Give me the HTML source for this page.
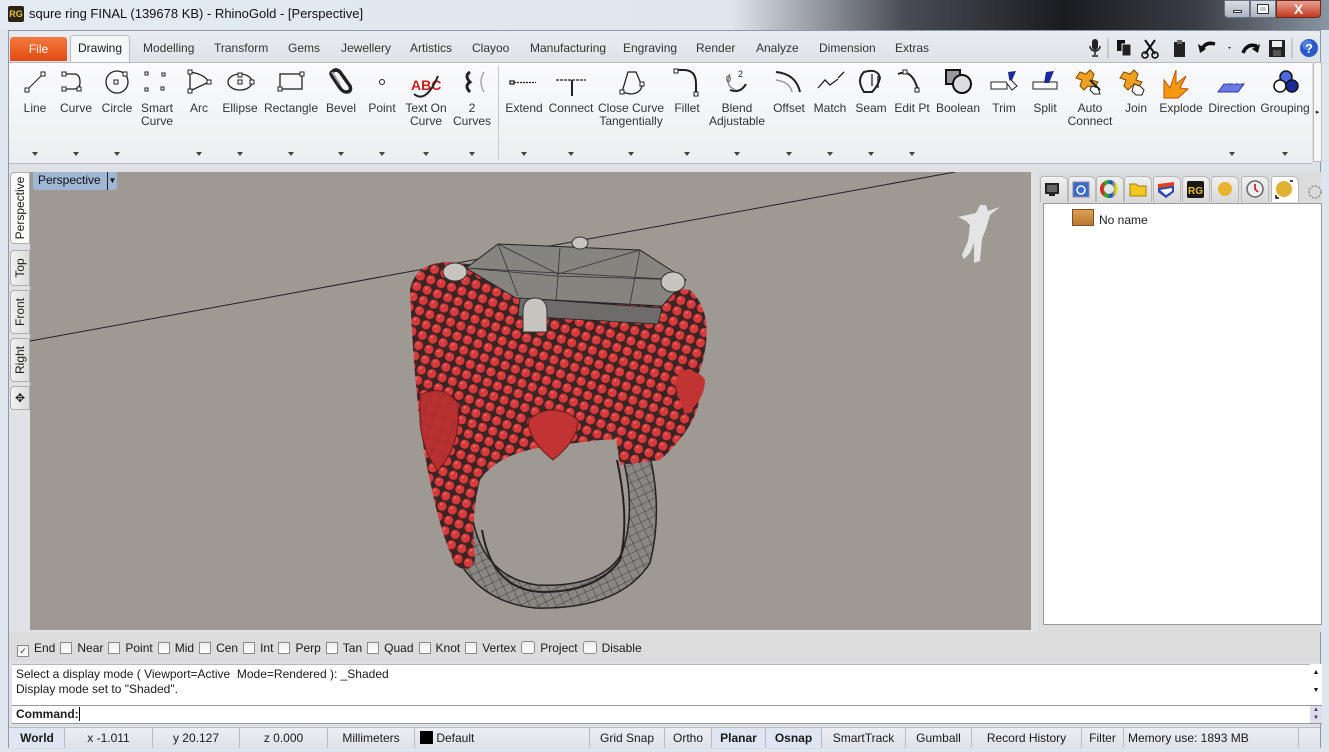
<!DOCTYPE html>
<html><head><meta charset="utf-8">
<style>
*{margin:0;padding:0;box-sizing:border-box}
body{width:1329px;height:752px;overflow:hidden;position:relative;background:#dde6ef;font-family:"Liberation Sans",sans-serif;font-size:12px;color:#1a1a1a}
.a{position:absolute}
.tab{position:absolute;top:38px;height:22px;line-height:20px;font-size:12px;color:#333}
.lbl{position:absolute;top:102px;font-size:12px;color:#333;text-align:center;line-height:13px;width:80px;margin-left:-40px}
.dd{position:absolute;top:152px;width:0;height:0;border-left:3px solid transparent;border-right:3px solid transparent;border-top:4px solid #444;margin-left:-3px}
.cb{display:inline-block;width:12px;height:12px;border:1px solid #8a8a8a;background:linear-gradient(#eee,#fff);vertical-align:-2px;margin-right:5px;margin-left:5px}
.st{position:absolute;top:728px;height:20px;line-height:20px;text-align:center;border-right:1px solid #b8bcc2;font-size:12px}
.vt{position:absolute;left:10px;width:20px;background:linear-gradient(90deg,#f2f2f2,#dcdcdc);border:1px solid #b0b0b0;border-radius:4px 0 0 4px}
.vt span{position:absolute;left:50%;top:50%;transform:translate(-50%,-50%) rotate(-90deg);white-space:nowrap;font-size:12px}
.ptab{position:absolute;top:176px;width:28px;height:26px;background:linear-gradient(#f0f0f0,#d8d8d8);border:1px solid #b8b8b8;border-bottom:none;border-radius:3px 6px 0 0}
</style></head><body>
<div class="a" style="left:0;top:0;width:1329px;height:30px;background:linear-gradient(90deg,#e4ebf2 0%,#dfe6ee 55%,#4a4d55 68%,#1b1c20 80%,#3a3d44 90%,#8a96a4 100%)"></div>
<div class="a" style="left:8px;top:6px;width:16px;height:16px;background:#2a2418;color:#e8c040;font-size:9px;font-weight:bold;line-height:16px;text-align:center;border-radius:2px">RG</div>
<div class="a" style="left:29px;top:6px;font-size:13px;color:#111">squre ring FINAL (139678 KB) - RhinoGold - [Perspective]</div>
<div class="a" style="left:1224px;top:0;width:26px;height:18px;background:linear-gradient(#d8dee6,#aab4c0);border:1px solid #6a7280;border-radius:0 0 0 4px"><div style="margin:9px auto 0;width:9px;height:3px;background:#fff;border:1px solid #333"></div></div>
<div class="a" style="left:1250px;top:0;width:26px;height:18px;background:linear-gradient(#d8dee6,#aab4c0);border:1px solid #6a7280"><div style="margin:4px auto 0;width:10px;height:8px;border:2px solid #fff;outline:1px solid #333"></div></div>
<div class="a" style="left:1276px;top:0;width:45px;height:18px;background:linear-gradient(#e8a090,#c23a20);border:1px solid #6a2a20;border-radius:0 0 4px 0;color:#fff;font-weight:bold;font-size:14px;text-align:center;line-height:17px">X</div>
<div class="a" style="left:8px;top:30px;width:1313px;height:718px;background:#dfe1e4;border:1px solid #8a98a8"></div>
<div class="a" style="left:9px;top:31px;width:1311px;height:31px;background:linear-gradient(#e9ecf0,#dfe3e8)"></div>
<div class="a" style="left:10px;top:37px;width:57px;height:24px;background:linear-gradient(#f47a40,#e24a10);border-radius:3px 3px 0 0;color:#fff;text-align:center;line-height:24px;font-size:12px">File</div>
<div class="a" style="left:70px;top:35px;width:60px;height:28px;background:#f6f7f8;border:1px solid #b8bcc2;border-bottom:none;border-radius:3px 3px 0 0;text-align:center;line-height:24px">Drawing</div>
<div class="tab" style="left:143px">Modelling</div>
<div class="tab" style="left:214px">Transform</div>
<div class="tab" style="left:288px">Gems</div>
<div class="tab" style="left:341px">Jewellery</div>
<div class="tab" style="left:410px">Artistics</div>
<div class="tab" style="left:472px">Clayoo</div>
<div class="tab" style="left:530px">Manufacturing</div>
<div class="tab" style="left:623px">Engraving</div>
<div class="tab" style="left:696px">Render</div>
<div class="tab" style="left:756px">Analyze</div>
<div class="tab" style="left:819px">Dimension</div>
<div class="tab" style="left:895px">Extras</div>
<svg class="a" style="left:1085px;top:36px" width="240" height="24">
<rect x="7" y="3" width="6" height="11" rx="3" fill="#222"/><path d="M5 10a5 5 0 0 0 10 0M10 15v4M7 20h6" stroke="#222" stroke-width="1.5" fill="none"/>
<line x1="23" y1="2" x2="23" y2="22" stroke="#aaa"/>
<rect x="32" y="4" width="8" height="11" fill="#111"/><rect x="37" y="8" width="9" height="12" fill="#222" stroke="#eee"/>
<path d="M60 4l10 14M70 4l-10 14" stroke="#111" stroke-width="2"/><circle cx="60" cy="19" r="3" fill="none" stroke="#111" stroke-width="1.6"/><circle cx="70" cy="19" r="3" fill="none" stroke="#111" stroke-width="1.6"/>
<rect x="89" y="6" width="11" height="15" fill="#222"/><rect x="92" y="4" width="5" height="4" fill="#666"/>
<path d="M116 15q4-10 14-7" stroke="#111" stroke-width="3.5" fill="none"/><path d="M113 8l2 9 6-4z" fill="#111"/>
<path d="M143 11l3 0-1.5 2z" fill="#333"/>
<path d="M158 17q4-10 14-7" stroke="#111" stroke-width="3.5" fill="none"/><path d="M175 8l-2 9-6-4z" fill="#111"/>
<rect x="184" y="4" width="16" height="17" fill="#222"/><rect x="187" y="5" width="10" height="6" fill="#eee"/><rect x="188" y="14" width="8" height="6" fill="#555"/>
<line x1="207" y1="2" x2="207" y2="22" stroke="#aaa"/>
<circle cx="224" cy="12" r="9" fill="#2a5ac8"/><circle cx="222" cy="9" r="5" fill="#6a9ae8" opacity=".6"/><text x="220" y="17" fill="#fff" font-size="13" font-weight="bold" font-family="Liberation Sans">?</text>
</svg>
<div class="a" style="left:9px;top:62px;width:1303px;height:102px;background:linear-gradient(#fbfbfc,#eceef1);border-top:1px solid #b8bcc2;border-bottom:1px solid #b8bcc2"></div>
<div class="a" style="left:498px;top:66px;width:1px;height:94px;background:#c4c8cc"></div>
<div class="a" style="left:1313px;top:62px;width:9px;height:100px;background:#f8f8f8;border:1px solid #bbb;font-size:7px;line-height:100px;text-align:center">▸</div>
<svg class="a" style="left:0;top:62px" width="1329" height="40" fill="none" stroke="#222" stroke-width="1.3">
<g fill="#fff" stroke-width="1">
<line x1="27" y1="28" x2="43" y2="12"/><rect x="25" y="26" width="4" height="4"/><rect x="41" y="10" width="4" height="4"/>
<path d="M64 12h10q6 0 6 8 0 7-6 7h-10" fill="none" stroke-width="1.3"/><rect x="62" y="10" width="4" height="4"/><rect x="62" y="25" width="4" height="4"/><rect x="77" y="25" width="4" height="4"/>
<circle cx="117" cy="20" r="11" fill="none" stroke-width="1.3"/><rect x="114" y="18" width="4" height="4"/><rect x="123" y="10" width="4" height="4"/>
<rect x="145" y="10" width="3" height="3"/><rect x="162" y="11" width="3" height="3"/><rect x="145" y="26" width="3" height="3"/><rect x="161" y="25" width="3" height="3"/>
<path d="M190 10q14 2 19 10l-19 9z" fill="none" stroke-width="1.3"/><rect x="188" y="8" width="4" height="4"/><rect x="188" y="27" width="4" height="4"/><rect x="207" y="18" width="4" height="4"/>
<ellipse cx="240" cy="20" rx="12" ry="8" fill="none" stroke-width="1.3"/><rect x="238" y="18" width="4" height="4"/><rect x="238" y="11" width="4" height="4"/><rect x="250" y="18" width="4" height="4"/>
<rect x="280" y="12" width="22" height="15" fill="none" stroke-width="1.3"/><rect x="278" y="25" width="4" height="4"/><rect x="300" y="10" width="4" height="4"/>
<circle cx="382" cy="20" r="2.5"/>
</g>
<path d="M332 10q4-4 8 0l10 14q2 6-4 6q-3 0-6-4l-8-12q-2-3 0-4z" stroke-width="3.5"/>
<path d="M332 10l8 12" stroke="#aaa" stroke-width="2"/>
<text x="411" y="28" font-size="14" font-weight="bold" fill="#c82020" stroke="none" font-family="Liberation Sans">ABC</text>
<path d="M414 32q12 10 24-18" stroke="#222" stroke-width="2"/>
<path d="M470 10q-6 4 0 10q-6 4 0 10" stroke-width="3"/><path d="M484 10q-6 10 0 20" stroke="#999"/>
<rect x="510" y="19" width="4" height="3" fill="#fff"/><path d="M514 20.5h22" stroke-dasharray="2 1"/>
<path d="M556 18h30" stroke-dasharray="3 1"/><path d="M572 18v16" stroke-width="2"/>
<path d="M622 30l6-20h8l6 14q-2 8-12 8z" fill="none"/><rect x="620" y="28" width="4" height="4" fill="#fff" stroke-width="1"/><rect x="640" y="20" width="4" height="4" fill="#fff" stroke-width="1"/>
<path d="M676 8h8q12 0 12 14v10" stroke-width="2"/><rect x="674" y="7" width="4" height="4" fill="#fff" stroke-width="1"/><rect x="694" y="30" width="4" height="4" fill="#fff" stroke-width="1"/>
<path d="M730 28q10 4 16-6" stroke-width="2"/><path d="M730 12q-6 12 6 16" stroke="#888"/><text x="726" y="20" font-size="9" fill="#222" stroke="none">0</text><text x="738" y="15" font-size="9" fill="#222" stroke="none">2</text>
<path d="M776 10q20 2 24 20" stroke-width="2"/><path d="M776 18q14 2 16 12" stroke="#999" stroke-width="1.5"/>
<path d="M818 26l7-8 5 5 8-6"/><path d="M838 16l6-6"/>
<path d="M864 30q-8-12 0-20q14-4 16 6q-2 8-8 14z" stroke-width="2"/><path d="M872 12v12M878 14v12"/>
<path d="M898 12q14-6 20 16" stroke-width="2"/><rect x="903" y="8" width="4" height="4" fill="#fff" stroke-width="1"/><rect x="915" y="26" width="4" height="4" fill="#fff" stroke-width="1"/>
<rect x="946" y="8" width="14" height="14" fill="#999" stroke="#111" stroke-width="2"/><circle cx="962" cy="22" r="9" fill="#ddd" stroke="#111" stroke-width="2"/>
<rect x="991" y="20" width="16" height="7" fill="#fff" stroke-width="1"/><path d="M1008 10l8-1-6 14z" fill="#1a2a9a" stroke="none"/><path d="M1006 20l6 8 5-4-6-6" fill="#fff" stroke-width="1"/>
<rect x="1033" y="20" width="24" height="7" fill="#fff" stroke-width="1"/><path d="M1046 10l8-1-5 12h-5z" fill="#1a2a9a" stroke="none"/>
<path d="M1080 10l6 2 4-4 4 4-2 6 6 2-4 6-6-2-4 4-4-4 2-6-6-2z" fill="#f0a020" stroke="#7a4a00" stroke-width="1"/><path d="M1090 18l10 10" stroke-width="2"/><path d="M1092 24l6 2 2 6-6 0-4-4z" fill="#fff" stroke-width="1"/>
<path d="M1124 10l6 2 4-4 4 4-2 6 6 2-4 6-6-2-4 4-4-4 2-6-6-2z" fill="#f0a020" stroke="#7a4a00" stroke-width="1"/><path d="M1134 22l6 2 4 4-2 5-6 0-4-4z" fill="#fff" stroke-width="1"/>
<path d="M1164 36l0-18 6 8 6-18 0 14 10-8-6 12 8 1-10 9z" fill="#f59a10" stroke="#c05000" stroke-width="1"/>
<path d="M1218 30l6-8h20l-6 8z" fill="#6a7ae0" stroke="#2a3aa0" stroke-width="1"/><path d="M1226 22v-3M1234 22v-3M1240 22v-3" stroke="#fff"/>
<circle cx="1286" cy="15" r="6" fill="#4a6ae0" stroke="#111" stroke-width="1.5"/><circle cx="1280" cy="24" r="6" fill="#fff" stroke="#111" stroke-width="1.5"/><circle cx="1292" cy="24" r="6" fill="#1a2a9a" stroke="#111" stroke-width="1.5"/>
</svg>
<div class="lbl" style="left:35px">Line</div><div class="lbl" style="left:76px">Curve</div><div class="lbl" style="left:117px">Circle</div><div class="lbl" style="left:157px">Smart<br>Curve</div><div class="lbl" style="left:199px">Arc</div><div class="lbl" style="left:240px">Ellipse</div><div class="lbl" style="left:291px">Rectangle</div><div class="lbl" style="left:341px">Bevel</div><div class="lbl" style="left:382px">Point</div><div class="lbl" style="left:426px">Text On<br>Curve</div><div class="lbl" style="left:472px">2<br>Curves</div>
<div class="lbl" style="left:524px">Extend</div><div class="lbl" style="left:571px">Connect</div><div class="lbl" style="left:631px;width:110px;margin-left:-55px">Close Curve<br>Tangentially</div><div class="lbl" style="left:687px">Fillet</div><div class="lbl" style="left:737px">Blend<br>Adjustable</div><div class="lbl" style="left:789px">Offset</div><div class="lbl" style="left:830px">Match</div><div class="lbl" style="left:871px">Seam</div><div class="lbl" style="left:912px">Edit Pt</div><div class="lbl" style="left:958px">Boolean</div><div class="lbl" style="left:1004px">Trim</div><div class="lbl" style="left:1045px">Split</div><div class="lbl" style="left:1090px">Auto<br>Connect</div><div class="lbl" style="left:1136px">Join</div><div class="lbl" style="left:1181px">Explode</div><div class="lbl" style="left:1232px">Direction</div><div class="lbl" style="left:1285px">Grouping</div>
<div class="dd" style="left:35px"></div><div class="dd" style="left:76px"></div><div class="dd" style="left:117px"></div><div class="dd" style="left:199px"></div><div class="dd" style="left:240px"></div><div class="dd" style="left:291px"></div><div class="dd" style="left:341px"></div><div class="dd" style="left:382px"></div><div class="dd" style="left:426px"></div><div class="dd" style="left:472px"></div><div class="dd" style="left:524px"></div><div class="dd" style="left:571px"></div><div class="dd" style="left:631px"></div><div class="dd" style="left:687px"></div><div class="dd" style="left:737px"></div><div class="dd" style="left:789px"></div><div class="dd" style="left:830px"></div><div class="dd" style="left:871px"></div><div class="dd" style="left:912px"></div><div class="dd" style="left:1232px"></div><div class="dd" style="left:1285px"></div>
<div class="vt" style="top:172px;height:72px;background:#fafafa"><span>Perspective</span></div>
<div class="vt" style="top:250px;height:36px"><span>Top</span></div>
<div class="vt" style="top:290px;height:44px"><span>Front</span></div>
<div class="vt" style="top:338px;height:44px"><span>Right</span></div>
<div class="vt" style="top:386px;height:24px"><span style="transform:translate(-50%,-50%)">✥</span></div>
<div class="a" style="left:30px;top:172px;width:1001px;height:458px;background:#9e9993"></div>
<svg class="a" style="left:30px;top:172px" width="1001" height="458" viewBox="30 172 1001 458">
<defs>
<pattern id="rd" width="11" height="11" patternUnits="userSpaceOnUse" patternTransform="rotate(20)">
<rect width="11" height="11" fill="#3a2424"/><circle cx="5.5" cy="5.5" r="4.6" fill="#d8393a"/><circle cx="4" cy="4" r="1.2" fill="#e86a6a"/>
</pattern>
<pattern id="wf" width="8" height="8" patternUnits="userSpaceOnUse" patternTransform="rotate(-25)">
<rect width="8" height="8" fill="#8a8682"/><path d="M0 0h8M0 0v8" stroke="#2a2a2a" stroke-width=".8"/>
</pattern>
</defs>
<line x1="30" y1="341" x2="955" y2="172" stroke="#222" stroke-width="1"/>
<path d="M445 520q15 80 90 88q85 2 115-45q15-60-5-125l-28 0q22 65 5 115q-20 35-85 32q-55-8-65-70z" fill="url(#wf)" stroke="#222" stroke-width="1.5"/>
<path d="M482 530q10 60 60 62q55 0 78-32q10-40-3-100" fill="none" stroke="#222" stroke-width="2"/>
<path d="M410 290Q415 262 450 262L690 290Q712 310 705 350Q700 390 660 420Q640 440 600 440L560 445Q500 450 480 480Q470 520 475 560Q470 575 455 565Q440 530 432 490Q415 420 410 290Z" fill="url(#rd)"/>
<path d="M610 400l90-20q5 40-40 80l-40 5z" fill="url(#rd)"/>
<path d="M420 395q22-12 38 8q4 40-20 68q-16-20-18-50z" fill="#b83030" stroke="#6a1a1a" opacity=".95"/>
<path d="M528 420q25-20 50 0q0 20-25 40q-25-20-25-40z" fill="#c23434" stroke="#6a1a1a"/>
<path d="M680 370q20 0 25 10q0 20-20 35l-10-30z" fill="#c23434"/>
<path d="M466 268l32-24 142 6 46 30-24 26-146-8z" fill="#86847f" stroke="#222"/>
<path d="M498 244l20 52M640 250l-10 54M466 268l220 12M560 248l-4 54M498 244l60 30 82-24M466 268l90 8 130 4" stroke="#333" stroke-width=".8" fill="none"/>
<path d="M520 298l142 10-4 16-140-8z" fill="#6e6c6a" stroke="#222" stroke-width=".8"/>
<ellipse cx="455" cy="272" rx="12" ry="9" fill="#c8c4c0" stroke="#333"/>
<ellipse cx="580" cy="243" rx="8" ry="6" fill="#c8c4c0" stroke="#333"/>
<ellipse cx="673" cy="282" rx="12" ry="10" fill="#c8c4c0" stroke="#333"/>
<path d="M523 312q0-14 12-14q12 0 12 14v20h-24z" fill="#c8c4c0" stroke="#333"/>
<path d="M958 217l18-4 4-8h6l2 6 12-4 -10 8-4 14-4 10-2 22-6 2 0-20-4 10-6 6-2-4 6-14 2-16-4-4z" fill="#e4e4e4"/>
</svg>
<div class="a" style="left:33px;top:172px;width:84px;height:18px;background:#9fb6d4;border-radius:0 0 3px 3px;font-size:12px;line-height:17px;padding-left:5px;color:#111">Perspective<span style="position:absolute;right:0;top:0;width:10px;height:18px;border-left:1px solid #222;font-size:8px;text-align:center">▼</span></div>
<div class="a" style="left:1038px;top:172px;width:283px;height:460px;background:#dcdcdc"></div>
<div class="ptab" style="left:1040px"></div><div class="ptab" style="left:1068px"></div><div class="ptab" style="left:1096px"></div><div class="ptab" style="left:1124px"></div><div class="ptab" style="left:1153px"></div><div class="ptab" style="left:1182px"></div><div class="ptab" style="left:1211px"></div><div class="ptab" style="left:1241px"></div><div class="ptab" style="left:1271px;background:#fff"></div>
<svg class="a" style="left:1040px;top:176px" width="289" height="26">
<defs><linearGradient id="g"><stop offset="0" stop-color="#e02020"/><stop offset=".33" stop-color="#20c020"/><stop offset=".66" stop-color="#2040e0"/><stop offset="1" stop-color="#e0e020"/></linearGradient></defs>
<rect x="5" y="7" width="14" height="11" fill="#222"/><rect x="7" y="9" width="10" height="7" fill="#666"/><rect x="9" y="18" width="6" height="2" fill="#222"/>
<rect x="33" y="6" width="16" height="15" fill="#3a6ac8" stroke="#88a"/><circle cx="41" cy="14" r="4" fill="none" stroke="#fff" stroke-width="1.5"/>
<circle cx="69" cy="13" r="7" fill="none" stroke="url(#g)" stroke-width="4"/>
<path d="M90 8h6l2 2h8v10h-16z" fill="#f5c820" stroke="#a08010"/>
<path d="M118 8l16-2 0 10-8 6-8-6z" fill="#e04020"/><path d="M118 12l16-2v6l-8 6-8-6z" fill="#2a4ab0"/><path d="M120 14l12-2v3l-6 4z" fill="#fff"/>
<rect x="147" y="5" width="17" height="17" rx="2" fill="#1a1610"/><text x="148" y="18" fill="#e8c030" font-size="10" font-weight="bold" font-family="Liberation Sans">RG</text>
<circle cx="185" cy="13" r="7" fill="#e8b430"/>
<circle cx="215" cy="13" r="8" fill="#eee" stroke="#666" stroke-width="1.5"/><path d="M215 8v5l3 3" stroke="#c00" stroke-width="1.5" fill="none"/>
<circle cx="244" cy="13" r="8" fill="#e0b030"/><path d="M236 19v3h3M253 5h-3" stroke="#111" stroke-width="1.5" fill="none"/>
<circle cx="275" cy="16" r="6" fill="none" stroke="#999" stroke-width="2" stroke-dasharray="2 1.5"/>
</svg>
<div class="a" style="left:1043px;top:203px;width:279px;height:422px;background:#fff;border:1px solid #999"></div>
<div class="a" style="left:1072px;top:209px;width:22px;height:17px;background:linear-gradient(#d8a050,#b87830);border:1px solid #7a5020"></div>
<div class="a" style="left:1099px;top:213px;font-size:12px">No name</div>
<div class="a" style="left:9px;top:632px;width:1311px;height:30px;background:#dcdcdc"></div>
<div class="a" style="left:12px;top:641px;font-size:12px;white-space:nowrap"><span class="cb" style="margin-left:5px;text-align:center;font-size:9px;line-height:10px;color:#335">✓</span>End<span class="cb"></span>Near<span class="cb"></span>Point<span class="cb"></span>Mid<span class="cb"></span>Cen<span class="cb"></span>Int<span class="cb"></span>Perp<span class="cb"></span>Tan<span class="cb"></span>Quad<span class="cb"></span>Knot<span class="cb"></span>Vertex<span class="cb" style="border-radius:3px;width:14px;height:13px"></span>Project<span class="cb" style="border-radius:3px;width:14px;height:13px"></span>Disable</div>
<div class="a" style="left:12px;top:664px;width:1298px;height:41px;background:#fff;border-top:1px solid #b8b8b8"></div>
<div class="a" style="left:16px;top:667px;font-size:12px;line-height:15px">Select a display mode ( Viewport=Active&nbsp; Mode=Rendered ): _Shaded<br>Display mode set to "Shaded".</div>
<div class="a" style="left:1310px;top:664px;width:12px;height:41px;background:#fff;font-size:7px;text-align:center;line-height:18px">▲<br>▼</div>
<div class="a" style="left:12px;top:705px;width:1310px;height:19px;background:#fff;border-top:1px solid #999;border-bottom:1px solid #999"></div>
<div class="a" style="left:16px;top:707px;font-size:12px;font-weight:bold">Command: <span style="font-weight:normal;border-left:1px solid #000"></span></div>
<div class="a" style="left:1310px;top:706px;width:12px;height:17px;background:#dde;font-size:6px;text-align:center;line-height:8px;color:#336">▲<br>▼</div>
<div class="a" style="left:9px;top:727px;width:1311px;height:22px;background:linear-gradient(#eceef2,#dde2e8);border-top:1px solid #b8bcc2"></div>
<div class="st" style="left:10px;width:55px;background:#dde6f2;font-weight:bold">World</div>
<div class="st" style="left:65px;width:88px">x -1.011</div>
<div class="st" style="left:153px;width:87px">y 20.127</div>
<div class="st" style="left:240px;width:88px">z 0.000</div>
<div class="st" style="left:328px;width:87px">Millimeters</div>
<div class="st" style="left:415px;width:175px;text-align:left;padding-left:5px"><span style="display:inline-block;width:13px;height:13px;background:#000;vertical-align:-2px"></span> Default</div>
<div class="st" style="left:590px;width:75px">Grid Snap</div>
<div class="st" style="left:665px;width:47px">Ortho</div>
<div class="st" style="left:712px;width:54px;font-weight:bold;background:#dde6f2">Planar</div>
<div class="st" style="left:766px;width:56px;font-weight:bold;background:#dde6f2">Osnap</div>
<div class="st" style="left:822px;width:84px">SmartTrack</div>
<div class="st" style="left:906px;width:66px">Gumball</div>
<div class="st" style="left:972px;width:110px">Record History</div>
<div class="st" style="left:1082px;width:42px">Filter</div>
<div class="st" style="left:1124px;width:175px;text-align:left;padding-left:4px">Memory use: 1893 MB</div>
</body></html>
